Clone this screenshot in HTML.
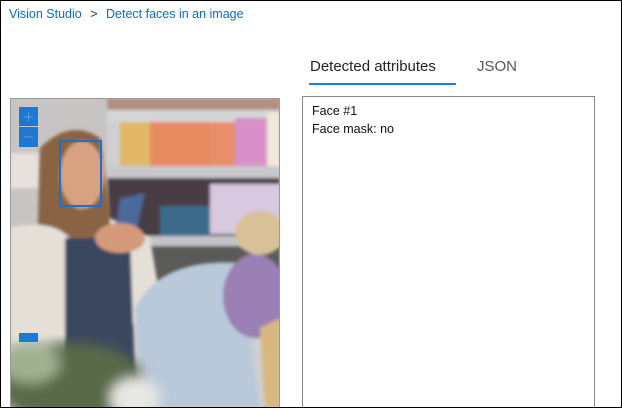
<!DOCTYPE html>
<html><head><style>
html,body{margin:0;padding:0;background:#fff}
#w{width:622px;height:408px;overflow:hidden;position:relative;box-sizing:border-box;border:1px solid #000;font-family:"Segoe UI","Liberation Sans",sans-serif}
.a{position:absolute;white-space:nowrap}
</style></head><body><div id="w">
<div class="a" style="left:8px;top:6px;font-size:12.5px;color:#0f6cbd">Vision Studio <span style="color:#333;margin:0 5px">&gt;</span> Detect faces in an image</div>
<div class="a" style="left:309px;top:57px;font-size:15px;color:#222">Detected attributes</div>
<div class="a" style="left:476px;top:57px;font-size:15px;color:#555">JSON</div>
<div class="a" style="left:308px;top:82px;width:147px;height:2px;background:#1b7fd6"></div>
<div class="a" style="left:301px;top:95px;width:291px;height:320px;border:1px solid #8a8a8a"></div>
<div class="a" style="left:311px;top:101px;font-size:12.5px;color:#111;line-height:18px">Face #1<br>Face mask: no</div>
<svg class="a" style="left:9px;top:97px" width="270" height="310" viewBox="0 0 270 310">
<defs><filter id="b"><feGaussianBlur stdDeviation="6"/></filter><filter id="s"><feGaussianBlur stdDeviation="1.5"/></filter></defs>
<rect width="270" height="310" fill="#cfcfd1"/>
<g filter="url(#s)">
<rect x="0" y="0" width="97" height="130" fill="#c8c4c4"/>
<rect x="0" y="55" width="30" height="35" fill="#e8e0dc"/>
<rect x="97" y="0" width="173" height="12" fill="#b09080"/>
<rect x="97" y="12" width="173" height="12" fill="#d6d6d8"/>
<rect x="110" y="24" width="30" height="46" fill="#e0b868"/>
<rect x="140" y="24" width="60" height="46" fill="#e68a60"/>
<rect x="200" y="24" width="25" height="46" fill="#e88e68"/>
<rect x="225" y="20" width="32" height="50" fill="#d890c8"/>
<rect x="257" y="15" width="13" height="55" fill="#f0e8d8"/>
<rect x="97" y="68" width="173" height="12" fill="#c8c8cc"/>
<rect x="97" y="80" width="173" height="58" fill="#4a3e44"/>
<rect x="150" y="108" width="50" height="30" fill="#3a6a8a"/>
<rect x="200" y="86" width="70" height="50" fill="#d8c8e0"/>
<rect x="97" y="138" width="173" height="10" fill="#c4c4c8"/>
<rect x="97" y="148" width="173" height="60" fill="#5a5a58"/>
</g>
<g filter="url(#s)">
<path d="M30 50 Q60 20 90 40 L100 110 L100 230 L25 230 Z" fill="#8a6444"/>
<path d="M0 130 Q40 120 60 140 L70 240 L0 245 Z" fill="#e4e0d8"/>
<path d="M100 120 L140 140 L150 200 L120 230 L100 200 Z" fill="#e4e0d8"/>
<path d="M55 140 L120 140 L125 280 L55 280 Z" fill="#3a465e"/>
<ellipse cx="72" cy="77" rx="22" ry="34" fill="#d8a282"/>
<path d="M110 100 L135 95 L125 140 L105 135 Z" fill="#4a6a9a"/>
<ellipse cx="110" cy="140" rx="25" ry="15" fill="#d49a7a"/>
<path d="M125 210 Q150 160 230 165 L250 310 L135 310 Z" fill="#b9c9da"/>
<ellipse cx="245" cy="198" rx="32" ry="42" fill="#9a80b4"/>
<ellipse cx="250" cy="135" rx="25" ry="22" fill="#d8c098"/>
<path d="M250 230 L270 220 L270 310 L255 310 Z" fill="#d8b880"/>
</g>
<g filter="url(#b)">
<ellipse cx="60" cy="285" rx="75" ry="40" fill="#5a6a48"/>
<ellipse cx="20" cy="265" rx="30" ry="20" fill="#a0b090"/>
<ellipse cx="125" cy="300" rx="25" ry="20" fill="#e8e8e4"/>
</g>
<rect x="50" y="43" width="41" height="65" fill="none" stroke="#1a6fd0" stroke-width="2"/>
<rect x="9" y="9" width="19" height="19" fill="#1b78d4"/>
<rect x="9" y="29" width="19" height="20" fill="#1b78d4"/>
<path d="M14 19h9M18.5 14.5v9" stroke="#5a9ee0" stroke-width="1"/>
<path d="M14 39h9" stroke="#5a8ab8" stroke-width="1.5"/>
<rect x="9" y="235" width="19" height="9" fill="#1b78d4"/>
<rect x="0.5" y="0.5" width="269" height="309" fill="none" stroke="#999"/>
</svg>
</div></body></html>
